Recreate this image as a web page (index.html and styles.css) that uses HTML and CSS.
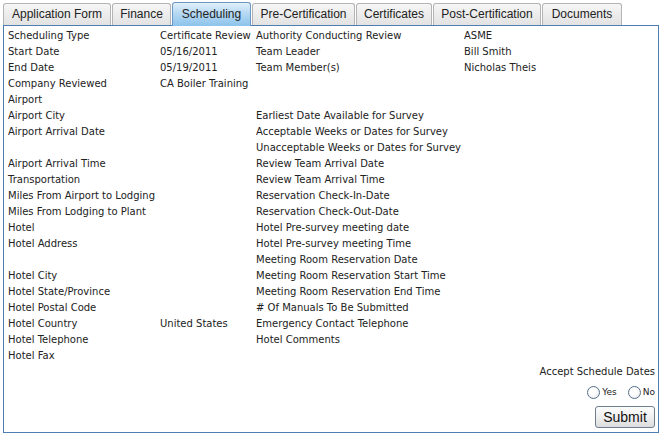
FILE: index.html
```html
<!DOCTYPE html>
<html>
<head>
<meta charset="utf-8">
<link rel="stylesheet" href="styles.css">
</head>
<body>
<div class="wrap">
  <div class="tabs">
    <div class="tab t-app">Application Form</div>
    <div class="tab t-fin">Finance</div>
    <div class="tab t-sched active">Scheduling</div>
    <div class="tab t-pre">Pre-Certification</div>
    <div class="tab t-cert">Certificates</div>
    <div class="tab t-post">Post-Certification</div>
    <div class="tab t-docs">Documents</div>
  </div>
  <div class="panel">
    <div class="grid">
      <span>Scheduling Type</span><span>Certificate Review</span><span>Authority Conducting Review</span><span>ASME</span>
      <span>Start Date</span><span>05/16/2011</span><span>Team Leader</span><span>Bill Smith</span>
      <span>End Date</span><span>05/19/2011</span><span>Team Member(s)</span><span>Nicholas Theis</span>
      <span>Company Reviewed</span><span>CA Boiler Training</span><span></span><span></span>
      <span>Airport</span><span></span><span></span><span></span>
      <span>Airport City</span><span></span><span>Earliest Date Available for Survey</span><span></span>
      <span>Airport Arrival Date</span><span></span><span>Acceptable Weeks or Dates for Survey</span><span></span>
      <span></span><span></span><span>Unacceptable Weeks or Dates for Survey</span><span></span>
      <span>Airport Arrival Time</span><span></span><span>Review Team Arrival Date</span><span></span>
      <span>Transportation</span><span></span><span>Review Team Arrival Time</span><span></span>
      <span>Miles From Airport to Lodging</span><span></span><span>Reservation Check-In-Date</span><span></span>
      <span>Miles From Lodging to Plant</span><span></span><span>Reservation Check-Out-Date</span><span></span>
      <span>Hotel</span><span></span><span>Hotel Pre-survey meeting date</span><span></span>
      <span>Hotel Address</span><span></span><span>Hotel Pre-survey meeting Time</span><span></span>
      <span></span><span></span><span>Meeting Room Reservation Date</span><span></span>
      <span>Hotel City</span><span></span><span>Meeting Room Reservation Start Time</span><span></span>
      <span>Hotel State/Province</span><span></span><span>Meeting Room Reservation End Time</span><span></span>
      <span>Hotel Postal Code</span><span></span><span># Of Manuals To Be Submitted</span><span></span>
      <span>Hotel Country</span><span>United States</span><span>Emergency Contact Telephone</span><span></span>
      <span>Hotel Telephone</span><span></span><span>Hotel Comments</span><span></span>
      <span>Hotel Fax</span><span></span><span></span><span></span>
    </div>
    <div class="accept">
      <div class="accept-label">Accept Schedule Dates</div>
      <div class="radios">
        <label class="opt"><span class="radio"></span>Yes</label>
        <label class="opt"><span class="radio"></span>No</label>
      </div>
      <button class="submit" type="button">Submit</button>
    </div>
  </div>
</div>
</body>
</html>
```
FILE: styles.css
```css
html, body {
  margin: 0;
  padding: 0;
  background: #fff;
}
.wrap {
  padding: 3px 0 0 3px;
  width: 656px;
}
.tabs {
  display: flex;
  gap: 1px;
  align-items: flex-end;
  height: 22px;
  position: relative;
  z-index: 1;
}
.tab {
  font-family: "Liberation Sans", Arial, sans-serif;
  font-size: 12px;
  color: #222;
  height: 22px;
  line-height: 21px;
  text-align: center;
  border: 1px solid #b4b4b4;
  border-bottom: none;
  border-radius: 3px 3px 0 0;
  background: linear-gradient(#f6f6f6, #e2e2e2);
  box-sizing: border-box;
}
.t-app { width: 108px; }
.t-fin { width: 59px; }
.t-sched { width: 79px; }
.t-pre { width: 103px; }
.t-cert { width: 76px; }
.t-post { width: 108px; }
.t-docs { width: 80px; }
.tab.active {
  height: 24px;
  line-height: 22px;
  border-color: #6d98c4;
  background: linear-gradient(#e2f0fa 0%, #b5d8f3 45%, #8cc3ec 100%);
  margin-bottom: -1px;
}
.panel {
  border: 1px solid #4d7db3;
  padding: 2px 3px 4px 4px;
  font-family: "DejaVu Sans", Verdana, sans-serif;
  font-size: 10px;
  color: #222;
}
.grid {
  display: grid;
  grid-template-columns: 152px 96px 208px 1fr;
  grid-auto-rows: 16px;
  line-height: 16px;
  white-space: nowrap;
}
.accept {
  display: flex;
  flex-direction: column;
  align-items: flex-end;
}
.accept-label {
  height: 16px;
  line-height: 16px;
}
.radios {
  display: flex;
  gap: 11px;
  margin-top: 4px;
  height: 16px;
  align-items: center;
}
.opt {
  display: flex;
  align-items: center;
  gap: 2px;
  font-size: 9px;
}
.radio {
  display: inline-block;
  width: 11px;
  height: 11px;
  border: 1px solid #56708c;
  border-radius: 50%;
  background: radial-gradient(circle at 40% 40%, #fff 35%, #e2e2e2 100%);
}
.submit {
  margin-top: 6px;
  font-family: "Liberation Sans", Arial, sans-serif;
  font-size: 14px;
  height: 22px;
  width: 60px;
  padding: 0;
  border: 1px solid #6e7f90;
  border-radius: 3px;
  background: linear-gradient(#fdfdfd, #ececec 60%, #dcdcdc);
  color: #111;
}
```
